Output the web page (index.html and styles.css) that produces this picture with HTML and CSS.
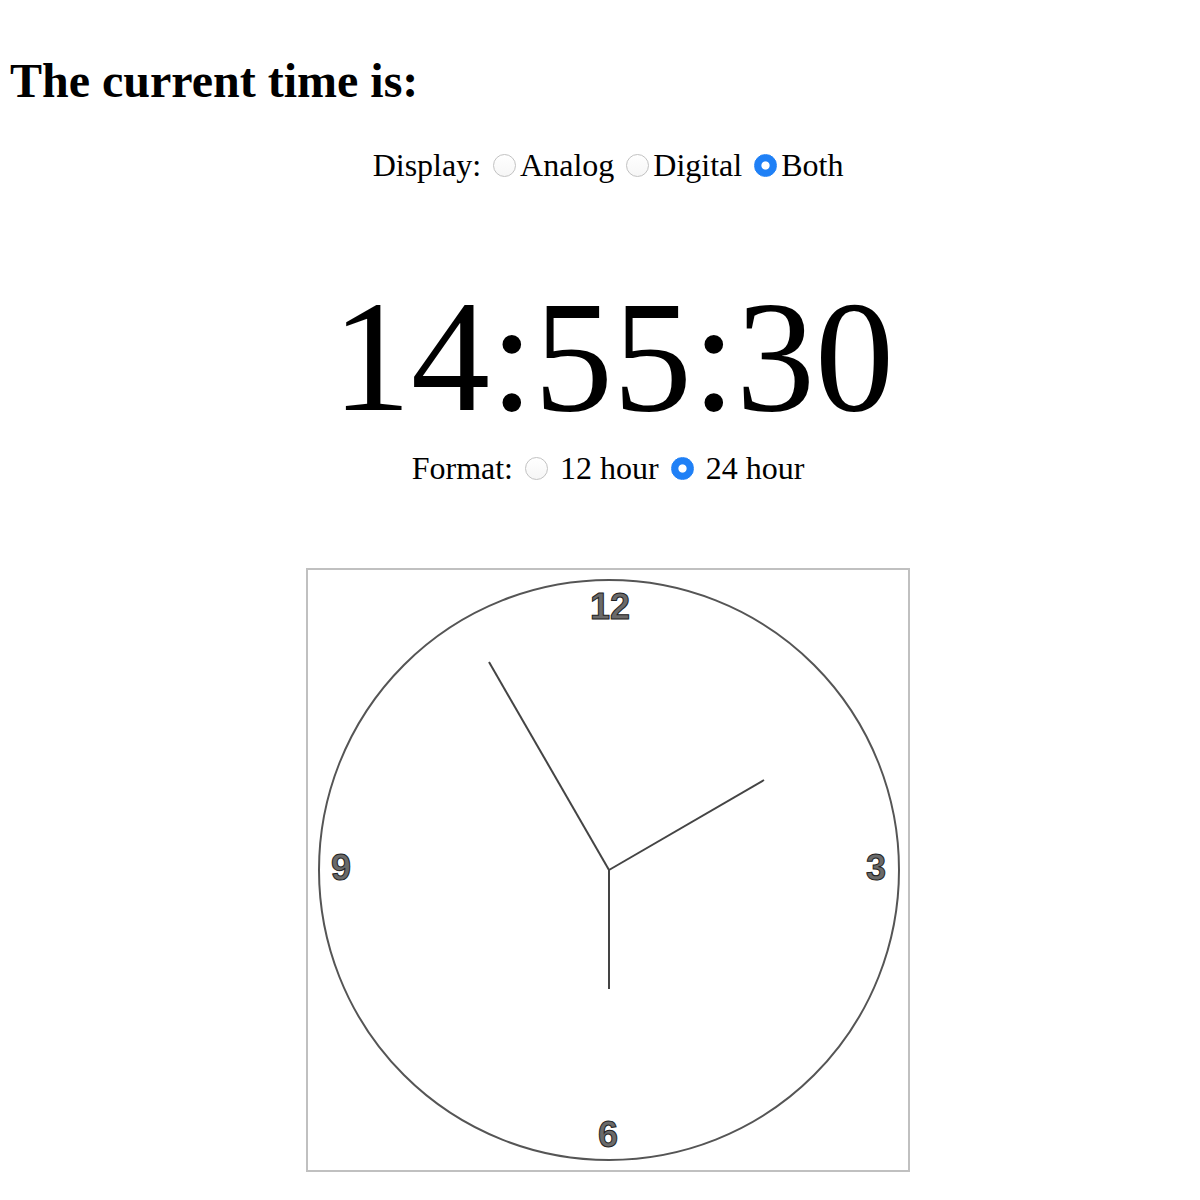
FILE: index.html
```html
<!DOCTYPE html>
<html>
<head>
<meta charset="utf-8">
<title>Clock</title>
<link rel="stylesheet" href="styles.css">
</head>
<body>
<h1 class="title">The current time is:</h1>
<div class="center">
  <div class="line display-line">Display: <input type="radio" class="radio" name="display">Analog <input type="radio" class="radio" name="display">Digital <input type="radio" class="radio" name="display" checked>Both</div>
  <div class="digital">14:55:30</div>
  <div class="line format-line">Format: <input type="radio" class="radio" name="format"> 12 hour <input type="radio" class="radio" name="format" checked> 24 hour</div>
  <div class="clock">
    <svg class="face" width="600" height="600" viewBox="0 0 600 600">
      <circle cx="301" cy="300" r="290" fill="none" stroke="#555" stroke-width="2"/>
      <g class="nums">
        <text x="302" y="49">12</text>
        <text x="568" y="310">3</text>
        <text x="300" y="577">6</text>
        <text x="33" y="310">9</text>
      </g>
      <g stroke="#444" stroke-width="2" stroke-linecap="butt">
        <line x1="301" y1="300" x2="456" y2="210"/>
        <line x1="301" y1="300" x2="181" y2="92"/>
        <line x1="301" y1="300" x2="301" y2="419"/>
      </g>
    </svg>
  </div>
</div>
</body>
</html>
```
FILE: styles.css
```css
html, body {
  background: #fff;
}
body {
  margin: 0;
  padding: 8px;
  font-family: "Liberation Serif", "Times New Roman", serif;
  color: #000;
}
.title {
  margin: 45px 0 0 2px;
  font-size: 48px;
  line-height: 56px;
  font-weight: 700;
}
.center {
  padding-left: 16px;
  text-align: center;
}
.line {
  font-size: 32px;
  line-height: 40px;
}
.display-line {
  margin-top: 36px;
}
.digital {
  margin-top: 81px;
  padding-left: 10px;
  font-size: 158px;
  line-height: 182px;
}
.format-line {
  margin-top: 0;
}
.radio {
  -webkit-appearance: none;
  appearance: none;
  box-sizing: border-box;
  width: 23px;
  height: 23px;
  margin: 0 4px;
  border: 1px solid #c2c2c2;
  border-radius: 50%;
  background: linear-gradient(#ffffff, #f6f6f6);
  vertical-align: baseline;
  position: relative;
  top: 1px;
}
.radio:checked {
  border-color: #1f80f6;
  background: radial-gradient(circle, #fff 0 3.6px, #1f80f6 4.6px);
}
.clock {
  width: 600px;
  height: 600px;
  margin: 80px auto 0;
  border: 2px solid #c0c0c0;
}
.face {
  display: block;
}
.nums text {
  font-family: "Liberation Sans", Arial, sans-serif;
  font-weight: 700;
  font-size: 36px;
  fill: #6a6a6a;
  stroke: #222;
  stroke-width: 1;
  text-anchor: middle;
}
```
